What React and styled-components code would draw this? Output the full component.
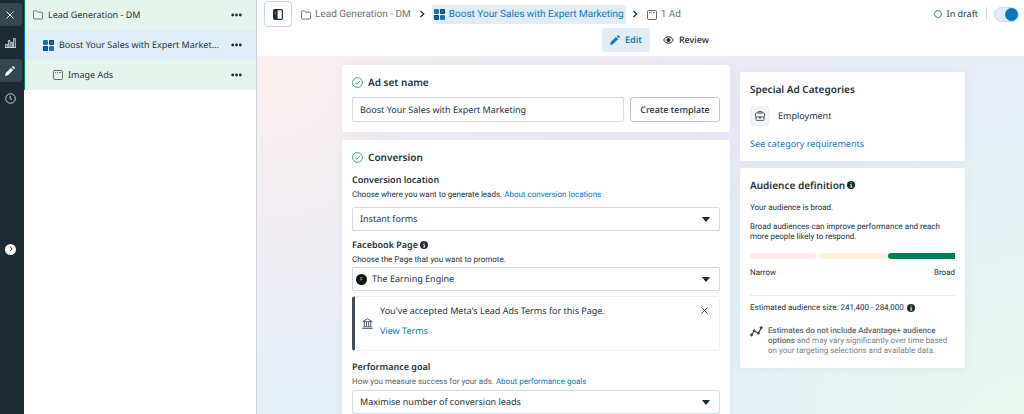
import styled, { createGlobalStyle, css } from "styled-components";

const GlobalStyle = createGlobalStyle`
  * {
    box-sizing: border-box;
  }
  body {
    margin: 0;
    background-color: white;
    color: #24333b;
    font-family: "Noto Sans", sans-serif;
    font-size: 9px;
    line-height: 14px;
    text-rendering: geometricPrecision;
  }
  h2, h3, p {
    margin: 0;
  }
  button, input, select {
    font: inherit;
    color: inherit;
    text-rendering: inherit;
  }
  svg {
    display: block;
    flex-shrink: 0;
  }
`;

const Shell = styled.div`
  display: flex;
  height: 100vh;
  overflow: hidden;
`;

/* left rail */
const Rail = styled.nav`
  display: flex;
  flex-direction: column;
  gap: 5px;
  width: 24px;
  padding-top: 3px;
  flex-shrink: 0;
  background-color: #1c2b33;
`;
const RailBtn = styled.button`
  display: grid;
  place-items: center;
  width: 22px;
  height: 23px;
  padding: 0 2px 0 0;
  border: 0;
  border-radius: 0 3px 3px 0;
  color: white;
  background-color: ${(props) => (props.$active ? "#344854" : "transparent")};
`;
const Spacer = styled.div`
  flex: ${(props) => props.$grow};
`;
const ExpandBtn = styled.button`
  display: grid;
  place-items: center;
  align-self: flex-start;
  width: 11px;
  height: 11px;
  margin-left: 5px;
  padding: 0;
  border: 0;
  border-radius: 50%;
  background-color: white;
`;

/* campaign tree */
const Tree = styled.aside`
  width: 233px;
  flex-shrink: 0;
  border-right: 1px solid #cbd2d9;
`;
const TreeRow = styled.div`
  display: flex;
  align-items: center;
  gap: 5px;
  height: 30px;
  padding: 0 14px 0 ${(props) => 8 + props.$depth * 10}px;
  border-left: 1px solid ${(props) => (props.$selected ? "#0a78be" : "#00805a")};
  background-color: ${(props) => (props.$selected ? "#e0edf7" : "#e6f4ee")};
`;
const TreeName = styled.span`
  flex: 1;
  min-width: 0;
  margin-right: 6px;
  overflow: hidden;
  white-space: nowrap;
  text-overflow: ellipsis;
`;
const IconBtn = styled.button`
  display: grid;
  place-items: center;
  padding: 0;
  border: 0;
  background: none;
`;

/* header */
const Main = styled.div`
  display: flex;
  flex-direction: column;
  flex: 1;
  min-width: 0;
`;
const Header = styled.header`
  height: 56px;
  flex-shrink: 0;
  padding: 1px 5px 0 7px;
`;
const TopBar = styled.div`
  display: flex;
  align-items: center;
  height: 26px;
`;
const PanelBtn = styled.button`
  display: grid;
  place-items: center;
  width: 28px;
  height: 26px;
  margin-right: 7px;
  padding: 0;
  border: 1px solid #cbd2e0;
  border-radius: 4px;
  background-color: white;
`;
const Crumb = styled.a`
  display: flex;
  align-items: center;
  gap: 4px;
  height: 19px;
  padding: 1px 2px 0;
  border-radius: 2px;
  font-family: Roboto, sans-serif;
  font-size: 10px;
  white-space: nowrap;
  text-decoration: none;
  color: #6a757c;
  ${(props) =>
    props.$current &&
    css`
      color: #0a78be;
      background-color: #e0edf7;
    `}
`;
const Separator = styled.span`
  display: grid;
  place-items: center;
  width: 19px;
`;
const Status = styled.div`
  display: flex;
  align-items: center;
  gap: 5px;
  margin-left: auto;
  padding-right: 8px;
  border-right: 1px solid #d5dade;
`;
const Ring = styled.span`
  width: 8px;
  height: 8px;
  border: 1px solid #2c9173;
  border-radius: 50%;
`;
const Toggle = styled.input.attrs({ type: "checkbox", role: "switch" })`
  display: flex;
  justify-content: flex-end;
  appearance: none;
  width: 25px;
  height: 15px;
  margin: 0 0 0 7px;
  border: 1px solid #d0dae2;
  border-radius: 8px;
  background-color: #e0edf7;
  &::before {
    content: "";
    width: 13px;
    height: 13px;
    border-radius: 50%;
    background-color: #0a78be;
  }
`;
const Tabs = styled.div`
  display: flex;
  justify-content: center;
  gap: 5px;
  margin-top: 1px;
  padding-left: 36px;
`;
const Tab = styled.button`
  display: flex;
  align-items: center;
  gap: 5px;
  height: 24px;
  padding: 0 8px;
  border: 0;
  border-radius: 3px;
  font-weight: ${(props) => (props.$active ? 600 : 500)};
  color: ${(props) => (props.$active ? "#0a78be" : "#1c2b33")};
  background-color: ${(props) => (props.$active ? "#e0edf7" : "transparent")};
`;

/* form */
const Canvas = styled.main`
  display: grid;
  grid-template-columns: minmax(0, 388fr) minmax(0, 225fr);
  align-items: start;
  gap: 10px;
  flex: 1;
  min-height: 0;
  padding: 9px 59px 9px 85px;
  overflow-y: auto;
  scrollbar-width: none;
  background:
    radial-gradient(circle at 0% 0%, #fbf0ee 0%, rgba(251, 240, 238, 0) 45%),
    radial-gradient(circle at 100% 110%, #e9f8ee 0%, rgba(233, 248, 238, 0) 50%),
    radial-gradient(circle at 50% 0%, #f0e8f2 0%, rgba(240, 232, 242, 0) 40%),
    linear-gradient(170deg, #e8e9f8 0%, #e2effa 80%);
`;
const Column = styled.div`
  display: flex;
  flex-direction: column;
  gap: ${(props) => props.$gap}px;
  padding-top: ${(props) => props.$top || 0}px;
`;
const Card = styled.section`
  padding: 10px;
  border-radius: 2px;
  background-color: white;
  box-shadow: 0 1px 8px rgba(60, 90, 150, 0.08);
`;
const CardTitle = styled.h2`
  display: flex;
  align-items: center;
  gap: 5px;
  font-size: 10px;
  line-height: 14px;
  font-weight: 600;
`;
const AudienceTitle = styled(CardTitle)`
  gap: 2px;
`;
const TemplateRow = styled.div`
  display: flex;
  gap: 6px;
  margin-top: 8px;
`;
const NameInput = styled.input.attrs({ type: "text" })`
  flex: 1;
  min-width: 0;
  height: 25px;
  padding: 0 7px;
  border: 1px solid #d3d9e0;
  border-radius: 2px;
`;
const TemplateBtn = styled.button`
  width: 90px;
  height: 25px;
  padding: 0;
  border: 1px solid #bcc5d0;
  border-radius: 3px;
  font-weight: 500;
  background-color: white;
`;
const Field = styled.div`
  margin-top: ${(props) => props.$top}px;
`;
const Label = styled.label`
  display: flex;
  align-items: center;
  gap: 2px;
  line-height: 12px;
  font-weight: 600;
`;
const Hint = styled.p`
  margin-top: 2px;
  font-family: Roboto, sans-serif;
  font-size: 8px;
  color: ${(props) => (props.$muted ? "#56636b" : "#24333b")};
`;
const Link = styled.a`
  color: #0a78be;
  text-decoration: none;
`;
const SelectBox = styled.div`
  display: grid;
  grid-template-columns: minmax(0, 1fr) 17px;
  align-items: center;
  height: 24px;
  margin-top: ${(props) => props.$top}px;
  border: 1px solid #d3d9e0;
  border-radius: 2px;
  > select {
    grid-area: 1 / 1 / 2 / 3;
    height: 22px;
    padding: 0 20px 0 ${(props) => (props.$avatar ? 19 : 7)}px;
    border: 0;
    appearance: none;
    background: none;
  }
  > svg {
    grid-area: 1 / 2;
    pointer-events: none;
  }
  > span {
    grid-area: 1 / 1;
    margin-left: 3px;
  }
`;
const Avatar = styled.span`
  display: grid;
  place-items: center;
  width: 11px;
  height: 11px;
  border-radius: 50%;
  background-color: #07130c;
`;
const Notice = styled.div`
  display: flex;
  align-items: center;
  gap: 7px;
  height: 55px;
  margin-top: 5px;
  padding: 0 11px 0 7px;
  border: 1px solid #eef0f2;
  border-left: 3px solid #444d59;
  border-radius: 3px;
`;
const NoticeBody = styled.div`
  display: flex;
  flex-direction: column;
  gap: 6px;
  flex: 1;
  padding-bottom: 6px;
`;
const CloseBtn = styled(IconBtn)`
  align-self: flex-start;
  margin-top: 10px;
`;

/* side cards */
const Category = styled.div`
  display: flex;
  align-items: center;
  gap: 8px;
  margin: 10px 0 11px;
`;
const IconTile = styled.span`
  display: grid;
  place-items: center;
  width: 20px;
  height: 20px;
  border-radius: 2px;
  background-color: #f0f3f5;
`;
const AudienceText = styled.p`
  margin-top: ${(props) => props.$top}px;
  font-family: Roboto, sans-serif;
  font-size: 8px;
  line-height: 10px;
`;
const Meter = styled.div`
  display: flex;
  gap: 2px;
  margin-top: 11px;
`;
const MeterPart = styled.span`
  flex: 1;
  height: 6px;
  border-radius: ${(props) => (props.$last ? "3px 0 0 3px" : "3px")};
  background-color: ${(props) => props.$color};
`;
const MeterLabels = styled.div`
  display: flex;
  justify-content: space-between;
  margin-top: 9px;
  padding-bottom: 17px;
  border-bottom: 1px solid #e8eaec;
  font-family: Roboto, sans-serif;
  font-size: 8px;
  line-height: 10px;
`;
const Estimate = styled(AudienceText)`
  display: flex;
  align-items: center;
  gap: 3px;
`;
const Note = styled.div`
  display: flex;
  gap: 5px;
  margin: 13px 0 2px;
  font-family: Roboto, sans-serif;
  font-size: 8px;
  line-height: 10px;
  color: #7a858b;
  b {
    font-weight: 500;
    color: #5b6870;
  }
`;

const Folder = ({ color = "#6a757c" }) => (
  <svg width="10" height="10" viewBox="0 0 10 10" fill="none" stroke={color}>
    <path d="M.5 8V1.5Q.5 .8 1.2.8H3.6L4.8 2.2H8.8Q9.5 2.2 9.5 2.9V8.2Q9.5 9 8.7 9H1.3Q.5 9 .5 8Z" />
  </svg>
);
const Blocks = () => (
  <svg width="11" height="11" viewBox="0 0 11 11">
    <rect width="5" height="5" rx="1" fill="#0a78be" />
    <rect x="6" width="5" height="5" rx="1" fill="#1c3d55" />
    <rect x="7.2" y="1.2" width="2.6" height="2.6" fill="#0a78be" />
    <rect y="6" width="5" height="5" rx="1" fill="#1c3d55" />
    <rect x="1.2" y="7.2" width="2.6" height="2.6" fill="#0a78be" />
    <rect x="6" y="6" width="5" height="5" rx="1" fill="#0a78be" />
  </svg>
);
const AdFrame = () => (
  <svg width="10" height="10" viewBox="0 0 10 10" fill="none" stroke="#5f6b73">
    <rect x=".5" y=".5" width="9" height="9" rx="1" />
    <path d="M2 2.6h1M3.8 2.6h1M6 2.6h2" />
  </svg>
);
const Dots = () => (
  <svg width="11" height="4" viewBox="0 0 11 4" fill="#1c2b33">
    <circle cx="1.7" cy="2" r="1.4" />
    <circle cx="5.5" cy="2" r="1.4" />
    <circle cx="9.3" cy="2" r="1.4" />
  </svg>
);
const Cross = ({ size = 8 }) => (
  <svg width={size} height={size} viewBox="0 0 8 8" stroke="currentColor">
    <path d="M.5 .5 7.5 7.5M7.5 .5 .5 7.5" />
  </svg>
);
const Bars = () => (
  <svg width="11" height="10" viewBox="0 0 11 10" fill="none" stroke="#d5dadd" strokeWidth=".9">
    <path d="M.6 9.5V6.5H2.4V9.5M3.4 9.5V2.5H5V9.5M6 9.5V4.5H7.6V9.5M8.6 9.5V.6H10.3V9.5M0 9.5H11" />
  </svg>
);
const Pencil = () => (
  <svg width="10" height="10" viewBox="0 0 10 10" fill="currentColor">
    <path d="M0 10 .8 7.1 6 1.9 8.1 4 2.9 9.2ZM6.8 1.1 7.5.4Q8.1-.1 8.7.4L9.6 1.3Q10.1 1.9 9.6 2.5L8.9 3.2Z" />
  </svg>
);
const Clock = () => (
  <svg width="11" height="11" viewBox="0 0 11 11" fill="none" stroke="#c9d0d4">
    <circle cx="5.5" cy="5.5" r="4.8" />
    <path d="M5.2 2.8V5.8L7 6.5" />
  </svg>
);
const Chevron = ({ size = 8 }) => (
  <svg width={size} height={size} viewBox="0 0 8 8" fill="none" stroke="#1c2b33" strokeWidth="1.3">
    <path d="M2.5 1 5.7 4 2.5 7" />
  </svg>
);
const PanelIcon = () => (
  <svg width="10" height="11" viewBox="0 0 10 11">
    <rect x=".6" y=".6" width="8.8" height="9.8" rx="1.2" fill="white" stroke="#1c2b33" strokeWidth="1.2" />
    <path d="M.6 1H4.6V10H.6Z" fill="#1c2b33" />
    <path d="M1.6 3H3M1.6 5H3" stroke="#9aa5ab" strokeWidth=".7" />
  </svg>
);
const Eye = () => (
  <svg width="11" height="8" viewBox="0 0 11 8" fill="none" stroke="#1c2b33">
    <path d="M.6 4Q2.6 .6 5.5 .6T10.4 4Q8.4 7.4 5.5 7.4T.6 4Z" />
    <circle cx="5.5" cy="4" r="1.6" fill="#1c2b33" />
  </svg>
);
const Check = () => (
  <svg width="11" height="11" viewBox="0 0 11 11" fill="none" stroke="#2c9173" strokeWidth=".9">
    <circle cx="5.5" cy="5.5" r="4.9" />
    <path d="M3.2 5.7 4.8 7.2 7.9 4" />
  </svg>
);
const Info = () => (
  <svg width="8" height="8" viewBox="0 0 8 8">
    <circle cx="4" cy="4" r="4" fill="#1c2b33" />
    <path d="M3.2 3.6H4.3V5.9M3.1 6H5.2M3.7 1.9H4.6" stroke="white" strokeWidth=".9" fill="none" />
  </svg>
);
const Caret = () => (
  <svg width="8" height="5" viewBox="0 0 8 5" fill="#1c2b33">
    <path d="M.3 .6Q0 0 .8 0H7.2Q8 0 7.7 .6L4.5 4.5Q4 5 3.5 4.5Z" />
  </svg>
);
const Bank = () => (
  <svg width="11" height="11" viewBox="0 0 11 11" fill="none" stroke="#444d59" strokeWidth=".9">
    <path d="M.8 3.6 5.5 .7 10.2 3.6ZM2.3 4V8.5M4.4 4V8.5M6.6 4V8.5M8.7 4V8.5M1 8.8H10M.3 10.4H10.7" />
  </svg>
);
const Briefcase = () => (
  <svg width="10" height="10" viewBox="0 0 10 10" fill="none" stroke="#3c4a52" strokeWidth=".9">
    <path d="M3 2V.6H7V2" />
    <rect x=".5" y="2" width="9" height="4" rx=".8" />
    <path d="M1 6V8.6Q1 9.4 1.8 9.4H8.2Q9 9.4 9 8.6V6" />
    <path d="M4.1 6.7H5.9" strokeWidth="1.8" />
  </svg>
);
const Trend = () => (
  <svg width="13" height="11" viewBox="0 0 13 11" fill="#3c4a52" stroke="#3c4a52">
    <path d="M1.5 9 4.2 4.8 8.4 7.2 11.2 2" fill="none" strokeWidth="1.2" />
    <circle cx="1.6" cy="9" r="1.1" />
    <circle cx="4.2" cy="4.8" r="1" />
    <circle cx="8.4" cy="7.2" r="1" />
    <circle cx="11.2" cy="1.8" r="1.1" />
  </svg>
);

function Dropdown({ id, value, top, avatar }) {
  return (
    <SelectBox $top={top} $avatar={avatar}>
      {avatar && (
        <Avatar>
          <svg width="5" height="6" viewBox="0 0 5 6">
            <path d="M1 1H4.2L3.4 2.4H1.8V3H3.6L3 4.2H1.8L1 5.4Z" fill="#3f7a3c" />
          </svg>
        </Avatar>
      )}
      <select id={id} defaultValue={value}>
        <option>{value}</option>
      </select>
      <Caret />
    </SelectBox>
  );
}

const rows = [
  { name: "Lead Generation - DM", icon: <Folder /> },
  { name: "Boost Your Sales with Expert Marketing", icon: <Blocks />, selected: true },
  { name: "Image Ads", icon: <AdFrame /> },
];

function App() {
  return (
    <>
      <GlobalStyle />
      <Shell>
        <Rail>
          <RailBtn $active aria-label="Close">
            <Cross />
          </RailBtn>
          <RailBtn aria-label="Charts">
            <Bars />
          </RailBtn>
          <RailBtn $active aria-label="Edit">
            <Pencil />
          </RailBtn>
          <RailBtn aria-label="History">
            <Clock />
          </RailBtn>
          <Spacer $grow={4} />
          <ExpandBtn aria-label="Expand">
            <Chevron size={6} />
          </ExpandBtn>
          <Spacer $grow={5} />
        </Rail>

        <Tree>
          {rows.map((row, depth) => (
            <TreeRow key={row.name} $depth={depth} $selected={row.selected}>
              {row.icon}
              <TreeName>{row.name}</TreeName>
              <IconBtn aria-label="More options">
                <Dots />
              </IconBtn>
            </TreeRow>
          ))}
        </Tree>

        <Main>
          <Header>
            <TopBar>
              <PanelBtn aria-label="Toggle panel">
                <PanelIcon />
              </PanelBtn>
              <Crumb href="#campaign">
                <Folder />
                Lead Generation - DM
              </Crumb>
              <Separator>
                <Chevron />
              </Separator>
              <Crumb href="#adset" $current>
                <Blocks />
                Boost Your Sales with Expert Marketing
              </Crumb>
              <Separator>
                <Chevron />
              </Separator>
              <Crumb href="#ad">
                <AdFrame />1 Ad
              </Crumb>
              <Status>
                <Ring />
                In draft
              </Status>
              <Toggle defaultChecked aria-label="Ad set status" />
            </TopBar>
            <Tabs>
              <Tab $active>
                <Pencil />
                Edit
              </Tab>
              <Tab>
                <Eye />
                Review
              </Tab>
            </Tabs>
          </Header>

          <Canvas>
            <Column $gap={8}>
              <Card>
                <CardTitle>
                  <Check />
                  Ad set name
                </CardTitle>
                <TemplateRow>
                  <NameInput
                    aria-label="Ad set name"
                    defaultValue="Boost Your Sales with Expert Marketing"
                  />
                  <TemplateBtn>Create template</TemplateBtn>
                </TemplateRow>
              </Card>

              <Card>
                <CardTitle>
                  <Check />
                  Conversion
                </CardTitle>
                <Field $top={10}>
                  <Label htmlFor="location">Conversion location</Label>
                  <Hint>
                    Choose where you want to generate leads.{" "}
                    <Link href="#locations">About conversion locations</Link>
                  </Hint>
                  <Dropdown id="location" value="Instant forms" top={5} />
                </Field>
                <Field $top={8}>
                  <Label htmlFor="page">
                    Facebook Page <Info />
                  </Label>
                  <Hint>Choose the Page that you want to promote.</Hint>
                  <Dropdown id="page" value="The Earning Engine" top={0} avatar />
                </Field>
                <Notice>
                  <Bank />
                  <NoticeBody>
                    <p>You've accepted Meta's Lead Ads Terms for this Page.</p>
                    <Link href="#terms">View Terms</Link>
                  </NoticeBody>
                  <CloseBtn aria-label="Dismiss">
                    <Cross size={7} />
                  </CloseBtn>
                </Notice>
                <Field $top={10}>
                  <Label htmlFor="goal">Performance goal</Label>
                  <Hint $muted>
                    How you measure success for your ads.{" "}
                    <Link href="#goals">About performance goals</Link>
                  </Hint>
                  <Dropdown id="goal" value="Maximise number of conversion leads" top={1} />
                </Field>
              </Card>
            </Column>

            <Column $gap={7} $top={7}>
              <Card>
                <CardTitle>Special Ad Categories</CardTitle>
                <Category>
                  <IconTile>
                    <Briefcase />
                  </IconTile>
                  Employment
                </Category>
                <Link href="#requirements">See category requirements</Link>
              </Card>

              <Card>
                <AudienceTitle>
                  Audience definition <Info />
                </AudienceTitle>
                <AudienceText $top={11}>Your audience is broad.</AudienceText>
                <AudienceText $top={9}>
                  Broad audiences can improve performance and reach more people likely to respond.
                </AudienceText>
                <Meter>
                  <MeterPart $color="#ffe9e8" />
                  <MeterPart $color="#fff3d6" />
                  <MeterPart $color="#00805a" $last />
                </Meter>
                <MeterLabels>
                  <span>Narrow</span>
                  <span>Broad</span>
                </MeterLabels>
                <Estimate $top={7}>
                  Estimated audience size: 241,400 - 284,000 <Info />
                </Estimate>
                <Note>
                  <Trend />
                  <p>
                    <b>Estimates do not include Advantage+ audience options</b> and may vary
                    significantly over time based on your targeting selections and available data.
                  </p>
                </Note>
              </Card>
            </Column>
          </Canvas>
        </Main>
      </Shell>
    </>
  );
}

export default App;
